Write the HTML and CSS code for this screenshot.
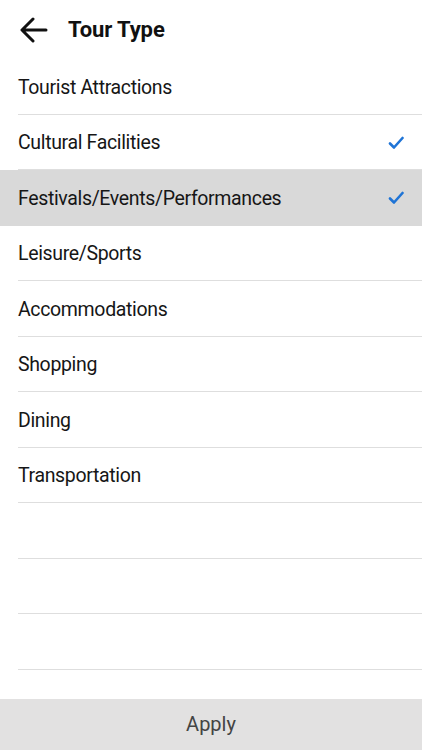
FILE: index.html
```html
<!DOCTYPE html>
<html lang="en">
<head>
    <meta charset="UTF-8">
    <meta name="viewport" content="width=device-width, initial-scale=1.0">
    <title>Tour Type</title>
    <link rel="stylesheet" href="styles.css">
</head>
<body>
    <header class="top-bar">
        <button class="back-btn" aria-label="Back">
            <svg width="28" height="26" viewBox="0 0 28 26">
                <path d="M26 13H3M13 2L2 13l11 11" fill="none" stroke="#111" stroke-width="3" stroke-linecap="round" stroke-linejoin="round"/>
            </svg>
        </button>
        <h1 class="nav-title">Tour Type</h1>
    </header>

    <ul class="type-list">
        <li class="type-item"><span>Tourist Attractions</span></li>
        <li class="type-item"><span>Cultural Facilities</span>
            <svg class="check" width="16" height="14" viewBox="0 0 16 14"><path d="M2 7.5l4 4L14.5 2" fill="none" stroke="#1f74d6" stroke-width="2.6" stroke-linecap="round" stroke-linejoin="round"/></svg>
        </li>
        <li class="type-item active"><span>Festivals/Events/Performances</span>
            <svg class="check" width="16" height="14" viewBox="0 0 16 14"><path d="M2 7.5l4 4L14.5 2" fill="none" stroke="#1f74d6" stroke-width="2.6" stroke-linecap="round" stroke-linejoin="round"/></svg>
        </li>
        <li class="type-item"><span>Leisure/Sports</span></li>
        <li class="type-item"><span>Accommodations</span></li>
        <li class="type-item"><span>Shopping</span></li>
        <li class="type-item"><span>Dining</span></li>
        <li class="type-item"><span>Transportation</span></li>
        <li class="type-item"></li>
        <li class="type-item"></li>
        <li class="type-item"></li>
    </ul>

    <button class="apply-btn">Apply</button>
</body>
</html>
```

FILE: styles.css
```css
* {
    box-sizing: border-box;
    margin: 0;
    padding: 0;
}

body {
    font-family: Roboto, "Liberation Sans", sans-serif;
    background-color: #fff;
    color: #111;
    height: 750px;
    display: flex;
    flex-direction: column;
    overflow: hidden;
}

.top-bar {
    height: 59px;
    display: flex;
    align-items: center;
    padding-left: 20px;
    gap: 20px;
}

.back-btn {
    background: none;
    border: none;
    display: flex;
    padding-top: 1px;
}

.nav-title {
    font-size: 22px;
    font-weight: 700;
    letter-spacing: -0.1px;
}

.type-list {
    list-style: none;
    flex: 1;
}

.type-item {
    height: 55.5px;
    display: flex;
    align-items: center;
    justify-content: space-between;
    padding: 1px 18px 0 18px;
    font-size: 19.5px;
    letter-spacing: -0.35px;
    color: #161616;
    position: relative;
}

.type-item::after {
    content: "";
    position: absolute;
    left: 18px;
    right: 0;
    bottom: 0;
    height: 1px;
    background-color: #dedede;
}

.type-item.active {
    background-color: #d9d9d9;
}

.type-item.active::after {
    display: none;
}

.check {
    display: block;
}

.apply-btn {
    height: 51px;
    border: none;
    background-color: #e2e1e1;
    color: #444;
    font-family: inherit;
    font-size: 20px;
    padding-bottom: 2px;
}
```
